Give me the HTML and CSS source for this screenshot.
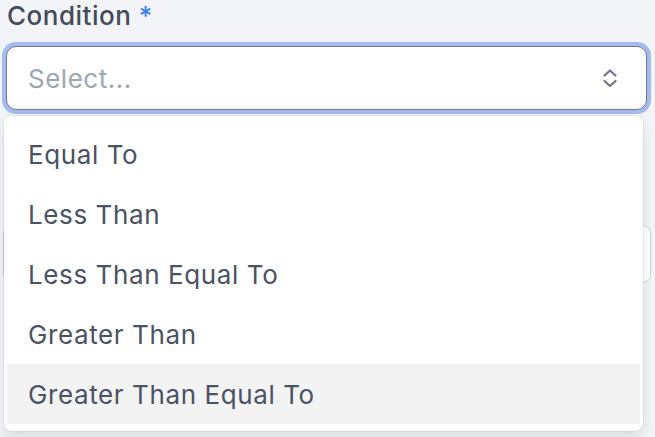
FILE: index.html
```html
<!DOCTYPE html>
<html lang="en">
<head>
<meta charset="utf-8">
<link rel="stylesheet" href="styles.css">
</head>
<body>
<div class="form">
  <div class="field">
    <label class="label">Condition <span class="req">*</span></label>
    <div class="select-wrap">
      <div class="select">
        <span class="placeholder">Select...</span>
        <svg class="chev" width="16" height="24" viewBox="0 0 16 24" fill="none" stroke="currentColor" stroke-width="2.2" stroke-linecap="round" stroke-linejoin="round"><path d="M2.5 9.5L8 4.5l5.5 5"/><path d="M2.5 15l5.5 5 5.5-5"/></svg>
      </div>
      <ul class="menu">
        <li class="opt">Equal To</li>
        <li class="opt">Less Than</li>
        <li class="opt">Less Than Equal To</li>
        <li class="opt">Greater Than</li>
        <li class="opt active">Greater Than Equal To</li>
      </ul>
    </div>
  </div>
  <div class="field next">
    <div class="input"></div>
  </div>
</div>
</body>
</html>
```
FILE: styles.css
```css
* { box-sizing: border-box; }
html, body { margin: 0; padding: 0; }
body {
  background: #f3f4f7;
  font-family: Inter, "Noto Sans", sans-serif;
  width: 655px;
  height: 437px;
  overflow: hidden;
}
.form {
  padding: 0 8px 0 6px;
}
.field {
  display: flex;
  flex-direction: column;
}
.label {
  font-size: 26px;
  line-height: 32px;
  font-weight: 500;
  color: #434a59;
  letter-spacing: 0.5px;
  margin-bottom: 14px;
  padding-left: 1px;
}
.req { color: #3b7cf0; }
.select-wrap { position: relative; }
.select {
  height: 64px;
  background: #fff;
  border: 1.5px solid #737a8c;
  border-radius: 10px;
  box-shadow: 0 0 0 4px #a3bbee, inset 0 -2px 3px rgba(0,0,0,0.04);
  display: flex;
  align-items: center;
  justify-content: space-between;
  padding: 0 28px 0 21px;
}
.placeholder {
  font-size: 26px;
  color: #9ea5b3;
  letter-spacing: 0.5px;
}
.chev { color: #6f7686; }
.menu {
  position: absolute;
  top: 70px;
  left: -2px;
  right: 4px;
  margin: 0;
  list-style: none;
  background: #fff;
  border-radius: 8px;
  padding: 8px 3px 7px;
  box-shadow: 0 0 0 1px rgba(0,0,0,0.04), 0 6px 14px rgba(0,0,0,0.1);
  z-index: 2;
}
.opt {
  height: 60px;
  display: flex;
  align-items: center;
  padding-left: 21px;
  font-size: 26px;
  color: #4a5263;
  letter-spacing: 0.6px;
}
.opt.active { background: #f3f3f4; }
.next { margin-top: 115px; }
.input {
  height: 58px;
  margin: 0 -4px 0 -3px;
  background: #fff;
  border: 1.5px solid #cfd3da;
  border-radius: 8px;
}
```
